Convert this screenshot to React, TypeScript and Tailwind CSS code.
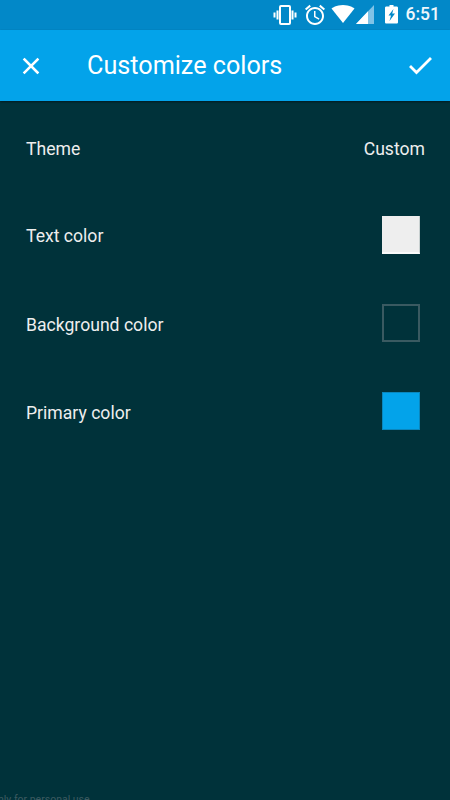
export default function App() {
  const rows = [
    { label: "Text color", swatch: "bg-[#eeeeee] border-b-2 border-b-[#fafafa] border-r border-r-[#c8d0d0]" },
    { label: "Background color", swatch: "bg-[#00323a] border-2 border-[#3a5a61]" },
    { label: "Primary color", swatch: "bg-[#03a3ea] border border-[#0a86bd]" },
  ];
  return (
    <div className="relative flex h-[800px] w-[450px] flex-col overflow-hidden bg-[#00323a] font-['Roboto',sans-serif]">
      <div className="flex h-[30px] items-center justify-end bg-[#0288c8] pr-[10px] text-white">
        <svg width="24" height="24" viewBox="0 0 24 24" fill="none">
          <rect x="7" y="3" width="10" height="18" rx="1" stroke="white" strokeWidth="2" />
          <path d="M0.500 9.500h2v5h-2zM3.500 7.500h2v9h-2zM18.500 7.500h2v9h-2zM21.500 9.500h2v5h-2z" fill="white" />
        </svg>
        <svg width="24" height="24" viewBox="0 0 24 24" className="ml-[6px]" fill="white">
          <path d="M22 5.720l-4.600-3.860-1.290 1.530 4.600 3.860L22 5.720zM7.880 3.390L6.600 1.860 2 5.710l1.290 1.530 4.590-3.850zM12.500 8H11v6l4.750 2.850.75-1.230-4-2.370V8zM12 4c-4.970 0-9 4.030-9 9s4.030 9 9 9 9-4.030 9-9-4.030-9-9-9zm0 16c-3.870 0-7-3.130-7-7s3.130-7 7-7 7 3.130 7 7-3.130 7-7 7z" />
        </svg>
        <svg width="24" height="24" viewBox="0 0 24 24" className="ml-[4px]" fill="white">
          <path d="M12 20L.500 5.500C1 5.100 5.400 2 12 2s11 3.100 11.500 3.500z" />
        </svg>
        <svg width="20" height="24" viewBox="0 0 20 24">
          <path d="M1 21L19 2v19z" fill="#7fc3e7" />
          <path d="M1 21L13 8.300V21z" fill="white" />
        </svg>
        <svg width="14" height="24" viewBox="0 0 14 24" className="ml-[10px]" fill="white">
          <path fillRule="evenodd" d="M4.500 2V3.500H1.300C.6 3.500 0 4.100 0 4.800v14.400C0 19.900.6 20.500 1.300 20.500h10.400c.7 0 1.300-.6 1.300-1.300V4.800C13 4.100 12.400 3.500 11.700 3.500H8.500V2zM8.500 6L3.500 12.500h2.500L4.500 18l5.500-7.500H7.200z" />
        </svg>
        <span className="ml-[7px] text-[17.500px] font-medium leading-none text-[#eef7fc]">6:51</span>
      </div>
      <div className="relative z-10 flex h-[71px] items-center bg-[#03a3ea] text-white shadow-[0_1px_2px_rgba(0,0,0,0.45)]">
        <svg width="24" height="24" viewBox="0 0 24 24" className="ml-[19px] shrink-0" fill="none" stroke="white" strokeWidth="2.500" strokeLinecap="square">
          <path d="M5.500 5.500l13 13M18.500 5.500l-13 13" />
        </svg>
        <span className="ml-[44px] flex-1 text-[25.200px] leading-none">Customize colors</span>
        <svg width="28" height="28" viewBox="0 0 28 28" className="mr-[16px] shrink-0" fill="none" stroke="white" strokeWidth="2.800" strokeLinecap="square">
          <path d="M5 15l5.500 5.500L24 7" />
        </svg>
      </div>
      <div className="flex flex-col px-[26px] pt-[4px] text-[17.600px] text-[#eeeeee]">
        <div className="flex h-[88px] items-center justify-between">
          <span className="mt-[1px]">Theme</span>
          <span className="ml-[1px] mr-[-1px] mt-[1px]">Custom</span>
        </div>
        {rows.map((r, i) => (
          <div key={r.label} className="flex h-[88px] items-center justify-between pr-[4px]">
            <span className={i === 0 ? "mb-[1px]" : ""}>{r.label}</span>
            <div className={`mb-[4px] h-[38px] w-[38px] ${r.swatch}`} />
          </div>
        ))}
      </div>
      <div className="absolute left-[-8px] top-[795px] text-[10.500px] leading-none text-[#3c5a60]">only for personal use</div>
    </div>
  );
}
